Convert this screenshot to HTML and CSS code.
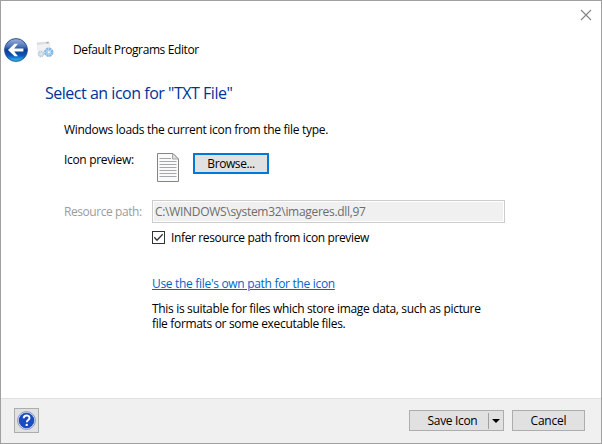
FILE: index.html
```html
<!DOCTYPE html>
<html lang="en">
<head>
<meta charset="utf-8">
<title>Default Programs Editor</title>
<link rel="stylesheet" href="styles.css">
</head>
<body>
<div class="window">
  <div class="titlebar">
    <svg class="close" width="12" height="12" viewBox="0 0 12 12"><path d="M1 1l10 10M11 1L1 11" stroke="#858585" stroke-width="1.1" fill="none"/></svg>
  </div>
  <header class="nav">
    <svg class="back" width="26" height="26" viewBox="0 0 26 26">
      <defs>
        <linearGradient id="orb" x1="0" y1="0" x2="0" y2="1"><stop offset="0" stop-color="#9fb4da"/><stop offset=".35" stop-color="#4a72b9"/><stop offset=".5" stop-color="#0b3a94"/><stop offset=".75" stop-color="#0c58bd"/><stop offset="1" stop-color="#35c5f5"/></linearGradient>
      </defs>
      <circle cx="13" cy="13" r="12.2" fill="#dfe7f1"/>
      <circle cx="13" cy="13" r="11.4" fill="url(#orb)" stroke="#2b4f8d" stroke-width=".9"/>
      <path d="M5 13L11.600 6.800H15L11.200 11.500H20.400V14.500H11.200L15 19.200H11.600Z" fill="#fff"/>
    </svg>
    <svg class="app" width="18" height="18" viewBox="0 0 18 18">
      <path d="M1 2L13 .8L14.5 11.5L2.5 13Z" fill="#f1f2f4" stroke="#dfe1e4" stroke-width=".6"/>
      <path d="M1 1.8L13 .7V2.6L1.200 4Z" fill="#dcdde1"/>
      <path d="M10.5 1.7h2" stroke="#c98983" stroke-width="1.200"/>
      <circle cx="5" cy="13" r="2.500" fill="#dce6ed" stroke="#bccfdc" stroke-width="1.800" stroke-dasharray="1.400 .5"/>
      <circle cx="12.800" cy="11.300" r="3.600" fill="#c9e3f8" stroke="#83b7e5" stroke-width="2.200" stroke-dasharray="2.200 .6"/>
      <circle cx="12.800" cy="11.300" r="2.100" fill="#a3cdf1"/><circle cx="12.800" cy="11.300" r="1" fill="#fff"/>
    </svg>
    <span class="t-app">Default Programs Editor</span>
  </header>
  <main class="content">
    <h1><span class="t-head">Select an icon for "TXT File"</span></h1>
    <p class="intro"><span class="t-intro">Windows loads the current icon from the file type.</span></p>
    <div class="row preview">
      <span class="label"><span class="t-prev">Icon preview:</span></span>
      <svg class="doc" width="22" height="29" viewBox="0 0 22 29">
        <path d="M.5 .5H16L21.500 6V28.500H.5Z" fill="#fafafa" stroke="#858585"/>
        <path d="M15.500 .5V6H21.500Z" fill="#e1e1e1" stroke="#969696" stroke-width=".8"/>
        <path d="M2.500 5.500H14M2.500 8.500H19.500M2.500 11.500H19.500M2.500 14.500H19.500M2.500 17.500H19.500M2.500 20.500H19.500M2.500 23.500H19.500" stroke="#a3a6aa"/>
      </svg>
      <button class="btn browse"><span class="t-browse">Browse...</span></button>
    </div>
    <div class="row path">
      <span class="label dim"><span class="t-res">Resource path:</span></span>
      <div class="field"><span class="t-path">C:\WINDOWS\system32\imageres.dll,97</span></div>
    </div>
    <div class="check">
      <svg width="13" height="13" viewBox="0 0 13 13"><rect x=".5" y=".5" width="12" height="12" fill="#fff" stroke="#333"/><path d="M2.300 6.300L5 9.200L10.700 3.300" fill="none" stroke="#333" stroke-width="1.300"/></svg>
      <span class="t-infer">Infer resource path from icon preview</span>
    </div>
    <div class="own">
      <a class="t-link">Use the file's own path for the icon</a>
      <p class="t-this">This is suitable for files which store image data, such as picture<br>file formats or some executable files.</p>
    </div>
  </main>
  <footer class="footer">
    <button class="btn help">
      <svg width="19" height="19" viewBox="0 0 19 19"><circle cx="9.500" cy="9.500" r="8.900" fill="#fff" stroke="#7d93c9" stroke-width="1"/><circle cx="9.500" cy="9.500" r="7.500" fill="#1a4bc2" stroke="#12389c" stroke-width=".7"/><path d="M6.700 7.300C6.700 3.500 12.500 3.600 12.500 7C12.500 9 9.800 9.100 9.800 11.300" fill="none" stroke="#fff" stroke-width="1.900"/><circle cx="9.700" cy="13.900" r="1.200" fill="#fff"/></svg>
    </button>
    <div class="actions">
      <button class="btn save"><span class="save-text"><span class="t-save">Save Icon</span></span><span class="drop"><svg width="8" height="4" viewBox="0 0 8 4"><path d="M0 0H8L4 4Z" fill="#000"/></svg></span></button>
      <button class="btn cancel"><span class="t-cancel">Cancel</span></button>
    </div>
  </footer>
</div>
</body>
</html>
```
FILE: styles.css
```css
* { box-sizing: border-box; }
body { margin: 0; font: 12px/15px "Open Sans", "Noto Sans", sans-serif; color: #000; }
.window { width: 602px; height: 444px; border: 1px solid #a0a0a0; background: #fff; display: flex; flex-direction: column; overflow: hidden; white-space: nowrap; }
h1, p { margin: 0; font-weight: normal; }
svg { display: block; flex: none; }
span, a { flex: none; }
.titlebar { height: 35px; display: flex; justify-content: flex-end; padding: 8px 9px 0 0; }
.nav { height: 26px; display: flex; align-items: center; padding-left: 2px; }
.back { margin-top: 1px; }
.app { margin: 2px 0 0 7px; }
.nav span { margin: 1px 0 0 19px; }
.content { height: 336px; padding-left: 63px; }
h1 { font-size: 16px; line-height: 22px; color: #003399; margin: 20px 0 0 -19px; }
.intro { margin-top: 18px; }
.row { display: flex; }
.label { width: 88px; }
.preview { height: 30px; margin-top: 15px; }
.doc { margin: 1px 14px 0 5px; }
.btn { display: flex; align-items: center; justify-content: center; font: inherit; color: #000; background: #e1e1e1; border: 1px solid #adadad; padding: 0; margin: 0; }
.browse { width: 76px; height: 21px; margin-top: 1px; border: 2px solid #0078d7; }
.path { height: 23px; margin-top: 18px; align-items: center; }
.dim { color: #9c9c9c; }
.field { width: 353px; height: 23px; border: 1px solid #ccc; background: #f0f0f0; box-shadow: inset 0 0 0 1px #fff; color: #6d6d6d; padding: 3px 0 0 2px; }
.check { display: flex; align-items: center; gap: 6px; height: 15px; margin: 7px 0 0 88px; }
.own { margin: 31px 0 0 88px; }
.own a { display: inline-block; color: #0066cc; text-decoration: underline; }
.own p { margin-top: 10px; }
.footer { flex: 1; border-top: 1px solid #dfdfdf; background: #f0f0f0; display: flex; justify-content: space-between; padding: 9px 16px 0 13px; }
.help { width: 25px; height: 25px; }
.actions { display: flex; gap: 8px; padding-top: 2px; }
.save { width: 95px; height: 21px; }
.save-text { width: 78px; display: flex; justify-content: center; padding-left: 7px; }
.drop { width: 15px; height: 16px; border-left: 1px solid #a0a0a0; display: flex; align-items: center; justify-content: center; }
.cancel { width: 73px; height: 21px; }
.t-app { letter-spacing: -.39px; }
.t-head { letter-spacing: -.48px; }
.t-intro { letter-spacing: -.3px; }
.t-prev { letter-spacing: -.33px; }
.t-browse { letter-spacing: -.42px; }
.t-res { letter-spacing: -.43px; }
.t-path { letter-spacing: -.3px; }
.t-infer { letter-spacing: -.37px; }
.t-link { letter-spacing: -.31px; }
.t-this { letter-spacing: -.33px; }
.t-save { letter-spacing: -.33px; }
.t-cancel { letter-spacing: -.2px; }
```
